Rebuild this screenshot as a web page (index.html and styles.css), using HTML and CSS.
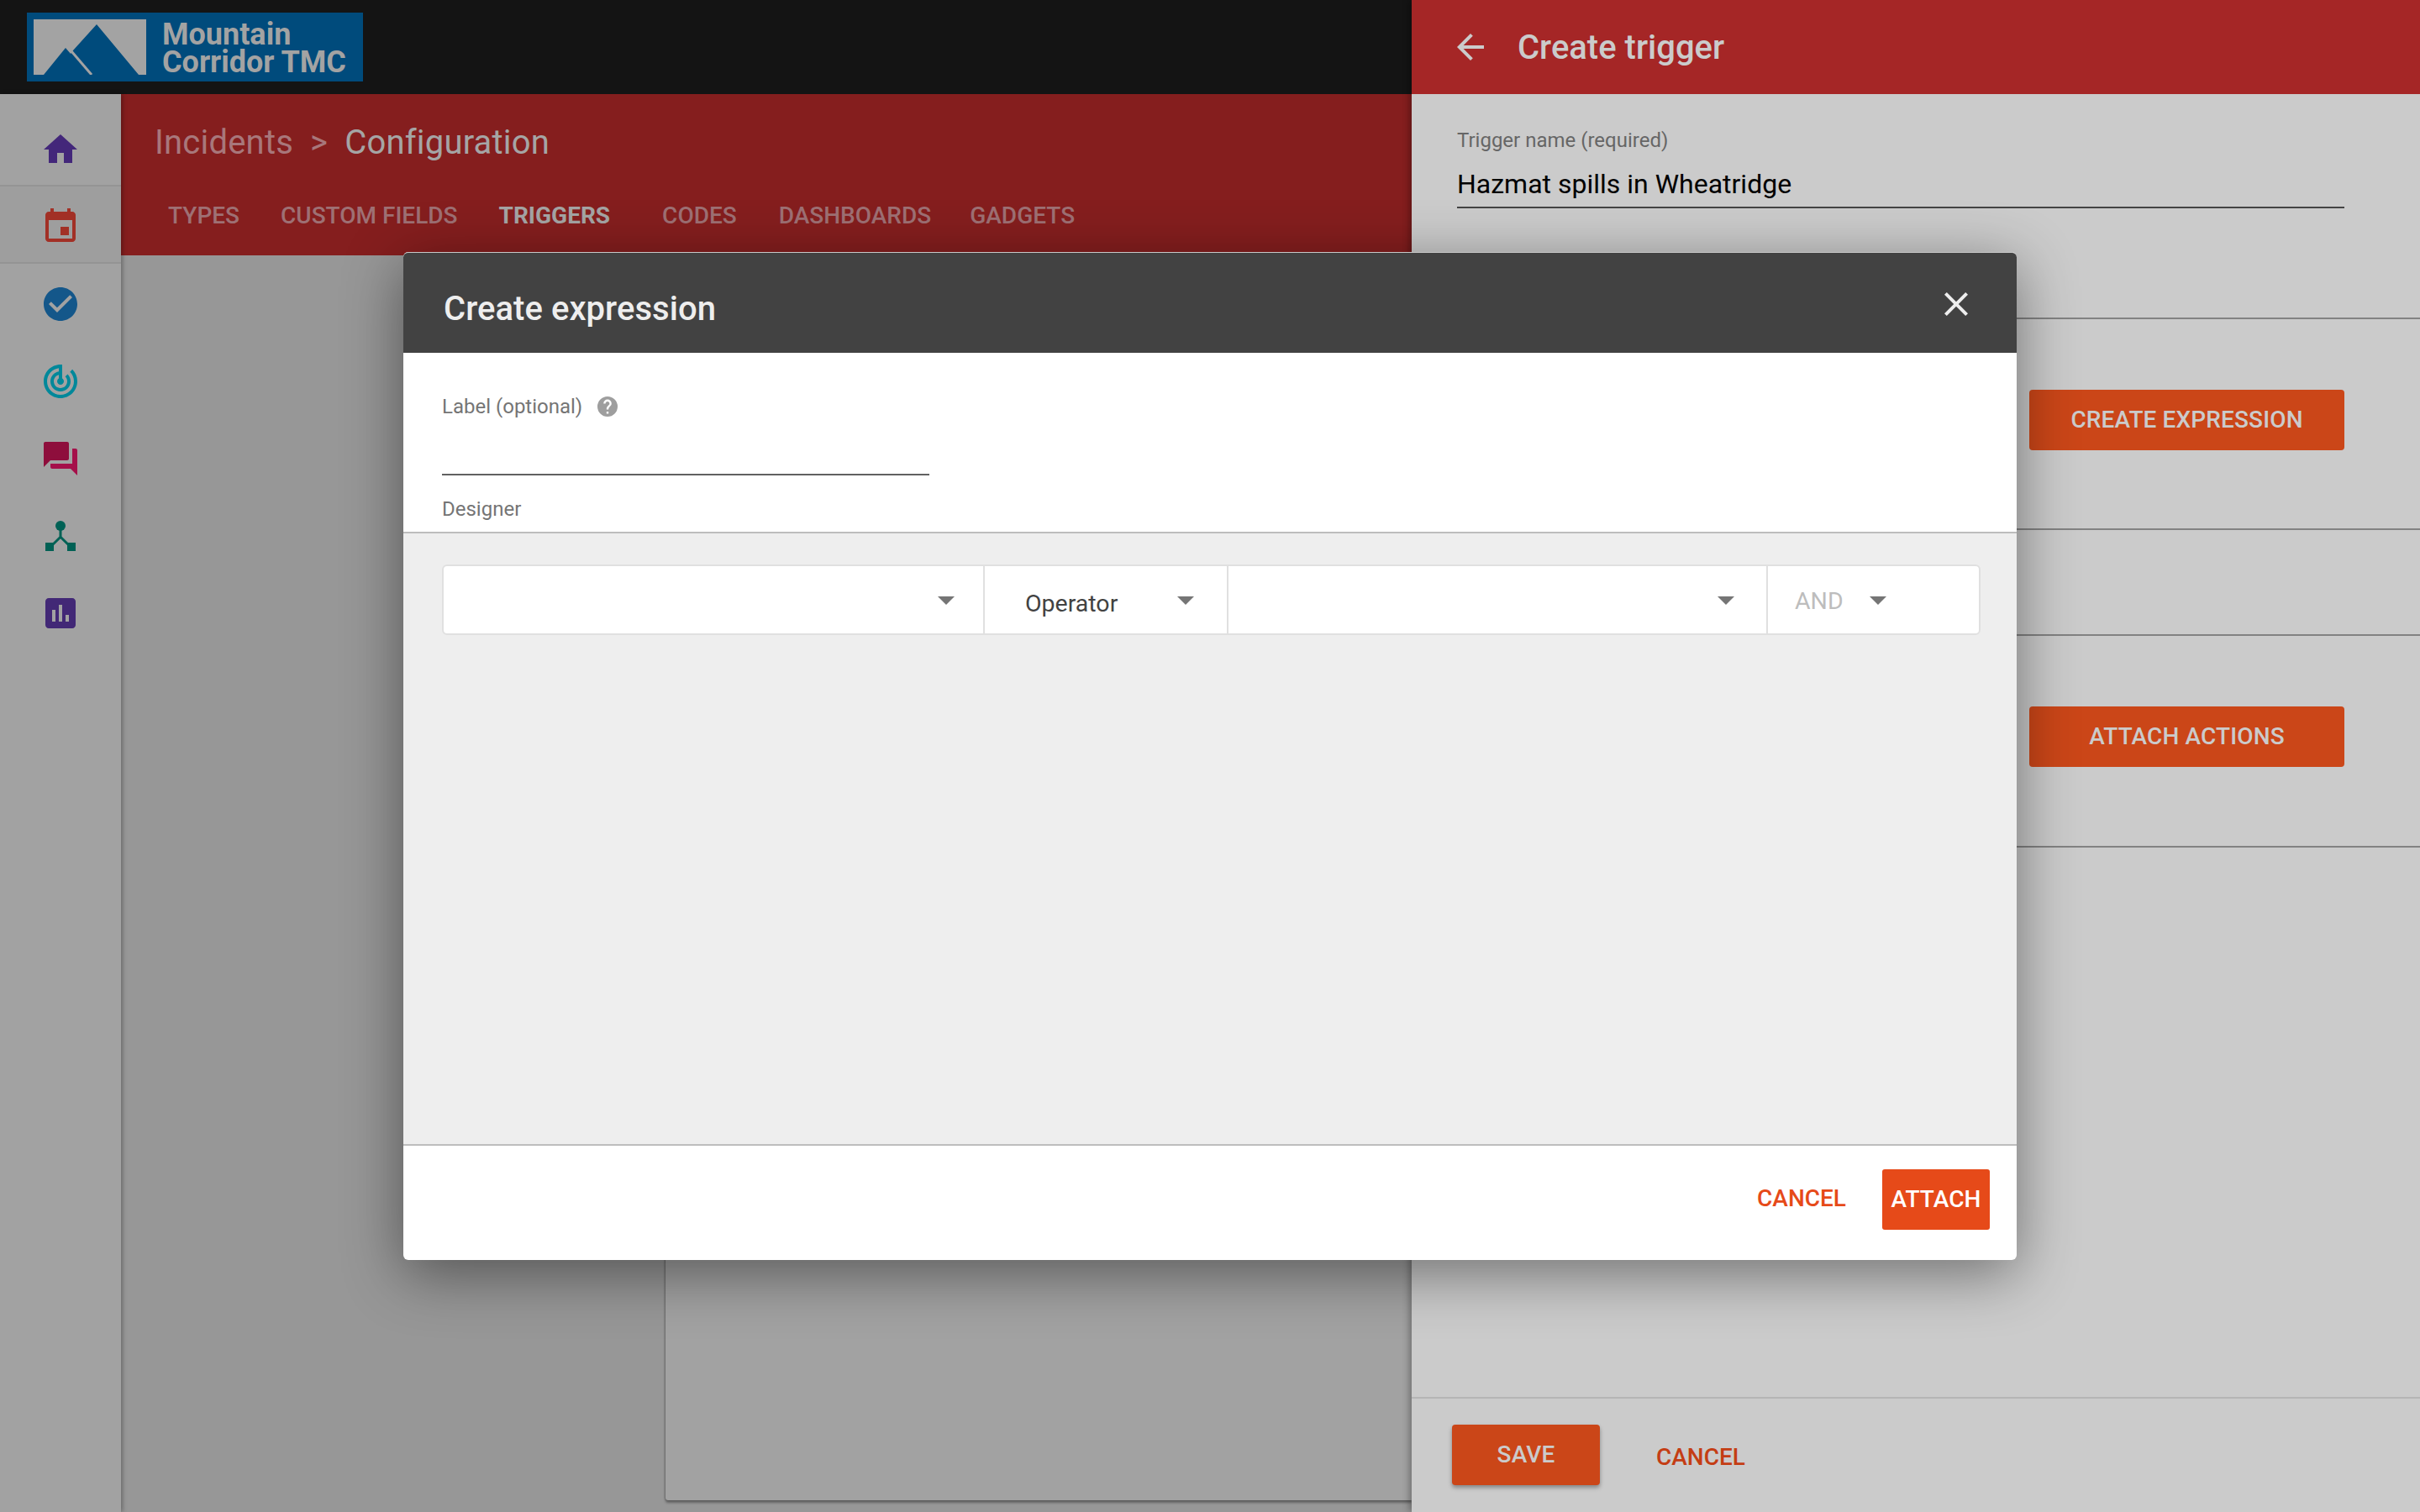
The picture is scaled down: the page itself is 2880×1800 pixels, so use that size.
FILE: index.html
```html
<!DOCTYPE html>
<html lang="en">
<head>
<meta charset="utf-8">
<title>Create expression</title>
<link rel="stylesheet" href="styles.css">
</head>
<body>
<div class="app">
  <header class="topbar">
    <div class="logo">
      <svg class="logo-mark" viewBox="0 0 134 66" width="134" height="66">
        <rect width="134" height="66" fill="#a3a3a3"/>
        <path d="M12 66 L38 34 L44 41 L47 37 L75 6 L125 66Z" fill="#004b7c"/>
        <path d="M45 38 L69 66" stroke="#a3a3a3" stroke-width="3" fill="none"/>
      </svg>
      <div class="logo-text"><div>Mountain</div><div>Corridor TMC</div></div>
    </div>
  </header>
  <div class="main">
    <nav class="sidebar">
      <div class="side-item sep">
        <svg class="ic" viewBox="0 0 24 24"><path fill="#43277a" d="M10 20v-6h4v6h5v-8h3L12 3 2 12h3v8z"/></svg>
      </div>
      <div class="side-item sep selected">
        <svg class="ic" viewBox="0 0 24 24"><path fill="#a23026" d="M17 12h-5v5h5v-5zM16 1v2H8V1H6v2H5c-1.11 0-1.99.9-1.99 2L3 19c0 1.1.89 2 2 2h14c1.1 0 2-.9 2-2V5c0-1.1-.9-2-2-2h-1V1h-2zm3 18H5V8h14v11z"/></svg>
      </div>
      <div class="side-item">
        <svg class="ic" viewBox="0 0 24 24"><path fill="#14578a" d="M12 2C6.48 2 2 6.48 2 12s4.48 10 10 10 10-4.48 10-10S17.52 2 12 2zm-2 15l-5-5 1.41-1.41L10 14.17l7.59-7.59L19 8l-9 9z"/></svg>
      </div>
      <div class="side-item">
        <svg class="ic" viewBox="0 0 24 24"><path fill="#00889a" d="M19.07 4.93l-1.41 1.41C19.1 7.79 20 9.79 20 12c0 4.42-3.58 8-8 8s-8-3.58-8-8c0-4.08 3.05-7.44 7-7.93v2.02C8.16 6.57 6 9.03 6 12c0 3.31 2.69 6 6 6s6-2.69 6-6c0-1.66-.67-3.16-1.76-4.24l-1.41 1.41C15.55 9.9 16 10.9 16 12c0 2.21-1.79 4-4 4s-4-1.79-4-4c0-1.86 1.28-3.41 3-3.86v2.14c-.6.35-1 .98-1 1.72 0 1.1.9 2 2 2s2-.9 2-2c0-.74-.4-1.38-1-1.72V2h-1C6.48 2 2 6.48 2 12s4.48 10 10 10 10-4.48 10-10c0-2.76-1.12-5.26-2.93-7.07z"/></svg>
      </div>
      <div class="side-item">
        <svg class="ic" viewBox="0 0 24 24"><path fill="#a5104a" d="M21 6h-2v9H6v2c0 .55.45 1 1 1h11l4 4V7c0-.55-.45-1-1-1z"/><path fill="#8e0e3c" d="M17 12V3c0-.55-.45-1-1-1H3c-.55 0-1 .45-1 1v14l4-4h10c.55 0 1-.45 1-1z"/></svg>
      </div>
      <div class="side-item">
        <svg class="ic" viewBox="0 0 24 24"><circle cx="12" cy="6" r="3" fill="#006155"/><rect x="3" y="16" width="5" height="5" fill="#006155"/><rect x="16" y="16" width="5" height="5" fill="#006155"/><path d="M12 8v5M12 12.6L6 18.5M12 12.6l6 5.9" stroke="#006155" stroke-width="1.5" fill="none"/></svg>
      </div>
      <div class="side-item">
        <svg class="ic" viewBox="0 0 24 24"><path fill="#422876" d="M19 3H5c-1.1 0-2 .9-2 2v14c0 1.1.9 2 2 2h14c1.1 0 2-.9 2-2V5c0-1.1-.9-2-2-2zM9 17H7v-7h2v7zm4 0h-2V7h2v10zm4 0h-2v-4h2v4z"/></svg>
      </div>
    </nav>
    <section class="content">
      <div class="hero">
        <div class="crumbs">
          <span class="crumb-dim">Incidents</span>
          <span class="crumb-sep">&gt;</span>
          <span class="crumb-cur">Configuration</span>
        </div>
        <div class="tabs">
          <span class="tab t1">TYPES</span>
          <span class="tab t2">CUSTOM FIELDS</span>
          <span class="tab t3 active">TRIGGERS</span>
          <span class="tab t4">CODES</span>
          <span class="tab t5">DASHBOARDS</span>
          <span class="tab t6">GADGETS</span>
        </div>
      </div>
      <div class="canvas">
        <div class="card"></div>
      </div>
    </section>
  </div>
</div>

<aside class="panel">
  <header class="panel-head">
    <svg class="ic back" viewBox="0 0 24 24"><path fill="#cbcbcb" d="M20 11H7.83l5.59-5.59L12 4l-8 8 8 8 1.41-1.41L7.83 13H20v-2z"/></svg>
    <h1 class="panel-title">Create trigger</h1>
  </header>
  <div class="panel-body">
    <div class="sec sec-name">
      <div class="field-label">Trigger name (required)</div>
      <div class="field-value">Hazmat spills in Wheatridge</div>
    </div>
    <div class="sec sec-expr"><div class="btn-solid wide">CREATE EXPRESSION</div></div>
    <div class="sec sec-mid"></div>
    <div class="sec sec-act"><div class="btn-solid wide">ATTACH ACTIONS</div></div>
    <div class="panel-fill"></div>
    <footer class="panel-foot">
      <div class="btn-solid save">SAVE</div>
      <div class="btn-text">CANCEL</div>
    </footer>
  </div>
</aside>

<div class="modal">
  <header class="modal-head">
    <h2 class="modal-title">Create expression</h2>
    <svg class="close" viewBox="0 0 24 24"><path fill="#eeeeee" d="M19 6.41L17.59 5 12 10.59 6.41 5 5 6.41 10.59 12 5 17.59 6.41 19 12 13.41 17.59 19 19 17.59 13.41 12z"/></svg>
  </header>
  <div class="modal-top">
    <div class="label-row">
      <span class="m-label">Label (optional)</span>
      <svg class="help" viewBox="0 0 20 20"><path fill="#9e9e9e" d="M10 0a10 10 0 1 0 0 20 10 10 0 0 0 0-20zm1 17H9v-2h2v2zm2.07-7.75l-.9.92C11.45 10.9 11 11.5 11 13H9v-.5c0-1.1.45-2.1 1.17-2.83l1.24-1.26c.37-.36.59-.86.59-1.41 0-1.1-.9-2-2-2s-2 .9-2 2H6a4 4 0 0 1 8 0c0 .88-.36 1.68-.93 2.25z"/></svg>
    </div>
    <div class="m-input"></div>
    <div class="m-label designer">Designer</div>
  </div>
  <div class="designer-area">
    <div class="selects">
      <div class="sel s1"><i class="caret"></i></div>
      <div class="sel s2"><span class="sel-op">Operator</span><i class="caret"></i></div>
      <div class="sel s3"><i class="caret"></i></div>
      <div class="sel s4"><span class="sel-and">AND</span><i class="caret"></i></div>
    </div>
  </div>
  <footer class="modal-foot">
    <div class="btn-text accent">CANCEL</div>
    <div class="btn-solid attach">ATTACH</div>
  </footer>
</div>
</body>
</html>
```
FILE: styles.css
```css
* { box-sizing: border-box; }
html, body { margin: 0; padding: 0; }
body {
  width: 2880px; height: 1800px; overflow: hidden;
  display: flex; position: relative;
  font-family: Roboto, "Liberation Sans", sans-serif;
  background: #cbcbcb;
}
h1, h2 { margin: 0; font-weight: 500; }
.ic { width: 48px; height: 48px; display: block; }

.app { width: 1680px; height: 1800px; display: flex; flex-direction: column; }
.topbar { height: 112px; background: #141414; padding: 15px 0 0 32px; flex: none; }
.logo { width: 400px; height: 82px; background: #004b7c; display: flex; padding: 8px 0 0 8px; }
.logo-mark { display: block; flex: none; }
.logo-text {
  margin: 2px 0 0 19px; font-size: 36px; line-height: 33px; height: 66px; font-weight: 700;
  color: #a3a3a3; white-space: nowrap;
}

.main { flex: 1; display: flex; min-height: 0; }
.sidebar {
  width: 144px; flex: none; background: #a2a2a2; padding-top: 18px;
  box-shadow: 2px 0 5px rgba(0,0,0,.3); position: relative; z-index: 1;
}
.side-item { height: 92px; padding: 24px 0 0 48px; }
.side-item.sep { border-bottom: 2px solid #949494; }
.side-item.selected { background: #9e9e9e; }

.content { flex: 1; display: flex; flex-direction: column; min-width: 0; }
.hero { height: 192px; background: #851e1e; flex: none; padding: 34px 0 0 40px; }
.crumbs { display: flex; font-size: 40px; line-height: 48px; height: 48px; letter-spacing: .2px; }
.crumb-dim { color: #a8777b; }
.crumb-sep { color: #a8777b; margin: 0 20px; }
.crumb-cur { color: #a5a5a5; }
.tabs { display: flex; margin-top: 46px; padding-left: 16px; font-size: 28px; line-height: 34px; font-weight: 500; color: #9e7074; }
.tab { white-space: nowrap; }
.t2 { margin-left: 49px; }
.t3 { margin-left: 49px; }
.t4 { margin-left: 62px; }
.t5 { margin-left: 50px; }
.t6 { margin-left: 46px; }
.tab.active { color: #a5a5a5; font-weight: 700; }

.canvas { flex: 1; background: #979797; padding: 0 0 14px 648px; display: flex; }
.card { flex: 1; background: #a2a2a2; box-shadow: 0 3px 3px rgba(0,0,0,.35), -1px 0 2px rgba(0,0,0,.2); border-radius: 0 0 0 3px; }

.panel {
  width: 1200px; height: 1800px; background: #cbcbcb; flex: none; display: flex; flex-direction: column;
  box-shadow: -3px 0 8px rgba(0,0,0,.3); position: relative; z-index: 2;
}
.panel-head { height: 112px; flex: none; background: #a52626; display: flex; align-items: center; padding: 0 0 0 46px; }
.panel-title { font-size: 40px; line-height: 48px; color: #cbcbcb; margin: 2px 0 0 32px; }
.panel-body { flex: 1; display: flex; flex-direction: column; min-height: 0; }
.sec { border-bottom: 2px solid #828282; padding: 0 90px 0 54px; }
.sec-name { height: 268px; padding-top: 40px; }
.field-label { font-size: 24px; line-height: 30px; color: #666; }
.field-value {
  font-size: 32px; line-height: 40px; color: #000; margin-top: 17px;
  height: 49px; border-bottom: 2px solid #444; width: 1056px; white-space: nowrap;
}
.sec-expr { height: 251px; padding-top: 84px; display: flex; justify-content: flex-end; align-items: flex-start; }
.sec-mid { height: 126px; }
.sec-act { height: 252px; padding-top: 84px; display: flex; justify-content: flex-end; align-items: flex-start; }
.panel-fill { flex: 1; }
.btn-solid {
  background: #cb4618; color: #cbcbcb; border-radius: 4px; font-size: 28px; font-weight: 500; letter-spacing: .12px;
  height: 72px; display: flex; align-items: center; justify-content: center; white-space: nowrap;
}
.btn-solid.wide { width: 375px; padding-bottom: 2px; }
.panel-foot {
  height: 137px; flex: none; border-top: 2px solid #b5b5b5;
  display: flex; align-items: flex-start; padding: 31px 0 0 48px;
}
.btn-solid.save { width: 176px; box-shadow: 0 3px 5px rgba(0,0,0,.35); padding-bottom: 1px; }
.btn-text { font-size: 28px; font-weight: 500; color: #c43d14; margin: 22px 0 0 67px; line-height: 34px; }

.modal {
  position: absolute; left: 480px; top: 300px; width: 1920px; height: 1200px; z-index: 5;
  display: flex; flex-direction: column; background: #fff; border-radius: 6px; overflow: visible;
  box-shadow: 0 16px 70px rgba(0,0,0,.45);
}
.modal-head {
  height: 120px; flex: none; background: #424242; border-top: 1px solid #c8c8c8; border-radius: 6px 6px 0 0;
  display: flex; justify-content: space-between; padding: 0 48px 0 48px;
}
.modal-title { font-size: 40px; line-height: 48px; color: #eee; margin-top: 43px; letter-spacing: .05px; }
.close { width: 48px; height: 48px; margin-top: 37px; display: block; }
.modal-top { height: 213px; flex: none; padding: 0 0 0 46px; }
.label-row { display: flex; align-items: center; height: 30px; margin-top: 49px; }
.m-label { font-size: 24px; line-height: 30px; color: #757575; }
.help { width: 24px; height: 24px; margin-left: 18px; display: block; }
.m-input { width: 580px; height: 2px; background: #616161; margin-top: 65px; }
.designer { margin-top: 25px; }
.designer-area {
  flex: 1; background: #eeeeee; border-top: 2px solid #bdbdbd; border-bottom: 2px solid #bdbdbd;
  padding: 37px 0 0 46px;
}
.selects {
  width: 1831px; height: 84px; display: flex; background: #fff;
  border: 2px solid #e0e0e0; border-radius: 6px;
}
.sel { position: relative; border-right: 2px solid #e0e0e0; height: 100%; display: flex; align-items: center; flex: none; }
.sel:last-child { border-right: 0; }
.s1 { width: 644px; }
.s2 { width: 290px; padding-left: 48px; }
.s3 { width: 642px; }
.s4 { flex: 1; padding-left: 32px; }
.sel-op { font-size: 28.5px; color: #424242; line-height: 40px; margin-top: 9px; }
.sel-and { font-size: 28.5px; color: #bdbdbd; line-height: 40px; margin-top: 3px; }
.caret { position: absolute; top: 36px; width: 0; height: 0; border-left: 10px solid transparent; border-right: 10px solid transparent; border-top: 10px solid #757575; }
.s1 .caret { left: 588px; }
.s2 .caret { left: 229px; }
.s3 .caret { left: 582px; }
.s4 .caret { left: 121px; }
.modal-foot { height: 136px; flex: none; display: flex; align-items: flex-start; justify-content: flex-end; padding: 28px 32px 0 0; border-radius: 0 0 6px 6px; }
.btn-text.accent { color: #e64a19; margin: 18px 43px 0 0; }
.btn-solid.attach { background: #e64a19; color: #fff; width: 128px; border-radius: 3px; padding-bottom: 2px; }
```
